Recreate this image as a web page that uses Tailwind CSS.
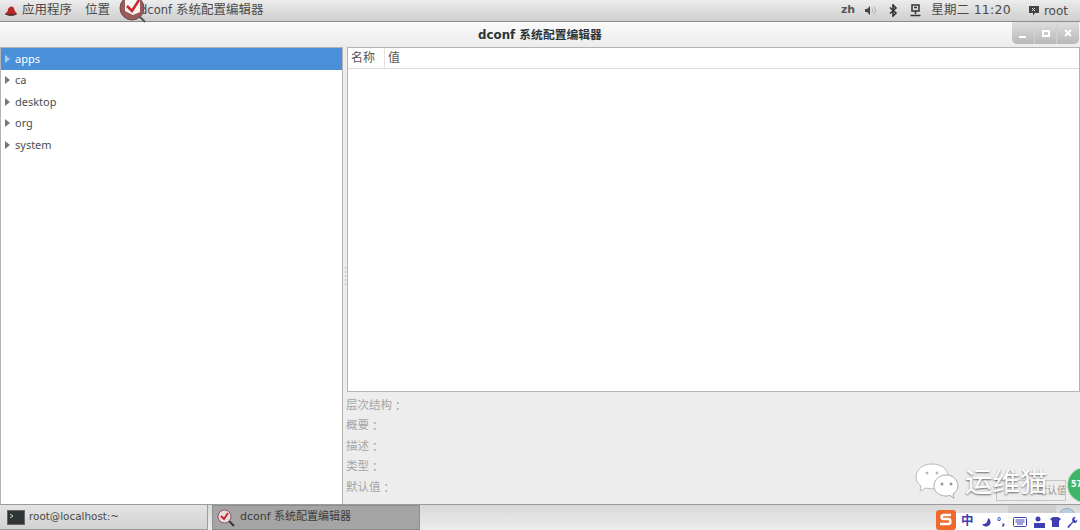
<!DOCTYPE html>
<html lang="zh">
<head>
    <meta charset="UTF-8">
    <title>dconf 系统配置编辑器</title>
    <script src="https://cdn.jsdelivr.net/npm/@tailwindcss/browser@4"></script>
</head>
<body class="relative w-[1080px] h-[530px] overflow-hidden bg-[#ededed] text-[#2e3436] font-['DejaVu_Sans','Noto_Sans_CJK_SC',sans-serif]">

    <!-- Top panel -->
    <header class="h-[22px] flex items-center bg-gradient-to-b from-[#ececec] to-[#cfcfcf] border-b border-[#8c8c8c] text-[12.5px] text-[#4a4a4a]">
        <svg class="ml-[4px] w-[14px] h-[12px]" viewBox="0 0 13 11">
            <path d="M1 8c2 1.500 9 1.500 11 0l-2-2.500C9.500 2 8 1 6 1.500 4 2 3.500 4 3.500 5.500z" fill="#b8242a"/>
            <path d="M0.500 8c3 2.500 9 2.500 12 0-3 1-9 1-12 0z" fill="#222"/>
        </svg>
        <span class="ml-[4px]">应用程序</span>
        <span class="ml-[13px]">位置</span>
        <span class="ml-[30px]"><span class="text-[11.500px]">dconf</span> 系统配置编辑器</span>
        <div class="ml-auto flex items-center">
            <span class="text-[11px] font-bold text-[#555]">zh</span>
            <svg class="ml-[9px] w-[13px] h-[11px]" viewBox="0 0 13 11">
                <path d="M1 4h2l3-3v9L3 7H1z" fill="#444"/>
                <path d="M8 3.500c1 1 1 3 0 4M10 2c2 2 2 5 0 7" fill="none" stroke="#aaa" stroke-width="1"/>
            </svg>
            <svg class="ml-[12px] w-[9px] h-[13px]" viewBox="0 0 9 13">
                <path d="M1 3.500l6 5.500-3 3V1l3 3-6 5.500" fill="none" stroke="#333" stroke-width="1.600"/>
            </svg>
            <svg class="ml-[12px] w-[11px] h-[13px]" viewBox="0 0 11 13">
                <path d="M2 1h7v6H2z" fill="none" stroke="#333" stroke-width="1.500"/>
                <path d="M4 3.500h3M5.500 7v3M0.500 11.500h10" fill="none" stroke="#333" stroke-width="1.500"/>
            </svg>
            <span class="ml-[10px] tracking-[0.25px]">星期二 11:20</span>
            <svg class="ml-[17px] w-[12px] h-[11px]" viewBox="0 0 12 11">
                <path d="M1 1h10v7H7l-2 2.500V8H1z" fill="#444"/>
                <path d="M4 3l3 3M7 3L4 6" stroke="#ddd" stroke-width="1"/>
            </svg>
            <span class="ml-[4px] mr-[12px] text-[12px]">root</span>
        </div>
    </header>

    <!-- Title bar -->
    <div class="relative h-[25px] flex items-center justify-center pt-[2px] bg-gradient-to-b from-[#fafafa] to-[#ececec] text-[11.800px] font-bold text-[#2e3436]">
        dconf 系统配置编辑器
        <div class="absolute top-0 right-[1px] w-[67px] h-[22px] flex rounded-b-[5px] bg-gradient-to-b from-[#dedede] to-[#b8b8b8] text-white">
            <div class="flex-1 flex items-end justify-center pb-[6px] border-r border-[#d0d0d0]"><div class="w-[7px] h-[2px] bg-white"></div></div>
            <div class="flex-1 flex items-center justify-center border-r border-[#d0d0d0]"><div class="w-[8px] h-[7px] border-2 border-white"></div></div>
            <div class="flex-1 flex items-center justify-center">
                <svg class="w-[8px] h-[8px]" viewBox="0 0 8 8"><path d="M1 1l6 6M7 1L1 7" stroke="#fff" stroke-width="2"/></svg>
            </div>
        </div>
    </div>

    <!-- Main window -->
    <main class="h-[457px] flex">
        <!-- Tree -->
        <div class="w-[343px] bg-white border border-[#b4b4b4] border-b-0 text-[11px] text-[#4a4f51] font-['Noto_Sans',sans-serif]">
            <div class="h-[21.500px] flex items-center bg-[#4a90d9] text-white">
                <span class="ml-[4px] w-0 h-0 border-y-[4px] border-y-transparent border-l-[5px] border-l-[#a9cdf0]"></span>
                <span class="ml-[5px]">apps</span>
            </div>
            <div class="h-[21.500px] flex items-center">
                <span class="ml-[4px] w-0 h-0 border-y-[4px] border-y-transparent border-l-[5px] border-l-[#777]"></span>
                <span class="ml-[5px]">ca</span>
            </div>
            <div class="h-[21.500px] flex items-center">
                <span class="ml-[4px] w-0 h-0 border-y-[4px] border-y-transparent border-l-[5px] border-l-[#777]"></span>
                <span class="ml-[5px]">desktop</span>
            </div>
            <div class="h-[21.500px] flex items-center">
                <span class="ml-[4px] w-0 h-0 border-y-[4px] border-y-transparent border-l-[5px] border-l-[#777]"></span>
                <span class="ml-[5px]">org</span>
            </div>
            <div class="h-[21.500px] flex items-center">
                <span class="ml-[4px] w-0 h-0 border-y-[4px] border-y-transparent border-l-[5px] border-l-[#777]"></span>
                <span class="ml-[5px]">system</span>
            </div>
        </div>

        <!-- Pane handle -->
        <div class="w-[4px] flex flex-col items-center justify-center gap-[2px]">
            <div class="w-[1px] h-[2px] bg-[#bbb]"></div>
            <div class="w-[1px] h-[2px] bg-[#bbb]"></div>
            <div class="w-[1px] h-[2px] bg-[#bbb]"></div>
            <div class="w-[1px] h-[2px] bg-[#bbb]"></div>
            <div class="w-[1px] h-[2px] bg-[#bbb]"></div>
        </div>

        <!-- Keys -->
        <div class="flex-1 flex flex-col">
            <div class="h-[345px] bg-white border border-[#b4b4b4]">
                <div class="h-[21px] flex items-center border-b border-[#dcdcdc] text-[12px] text-[#555]">
                    <div class="w-[37px] h-full flex items-center pl-[3px] border-r border-[#e2e2e2]">名称</div>
                    <div class="pl-[3px]">值</div>
                </div>
            </div>
            <div class="mt-[3px] -ml-[1px] flex flex-col text-[11.500px] text-[#a5a5a5]">
                <div class="h-[20.500px] flex items-center">层次结构<span class="font-['Noto_Sans_CJK_TC']">：</span></div>
                <div class="h-[20.500px] flex items-center">概要<span class="font-['Noto_Sans_CJK_TC']">：</span></div>
                <div class="h-[20.500px] flex items-center">描述<span class="font-['Noto_Sans_CJK_TC']">：</span></div>
                <div class="h-[21px] flex items-center">类型<span class="font-['Noto_Sans_CJK_TC']">：</span></div>
                <div class="h-[21px] flex items-center">默认值<span class="font-['Noto_Sans_CJK_TC']">：</span></div>
            </div>
        </div>
    </main>

    <!-- Bottom panel -->
    <footer class="h-[26px] flex items-stretch bg-gradient-to-b from-[#d8d8d8] to-[#ededed] border-t border-[#9a9a9a] text-[11px] text-[#4a4a4a]">
        <div class="w-[208px] flex items-center bg-gradient-to-b from-[#e4e4e4] to-[#d2d2d2] border-r border-b border-[#9e9e9e]">
            <svg class="ml-[7px] w-[18px] h-[15px]" viewBox="0 0 18 15">
                <rect x="0.500" y="0.500" width="17" height="14" fill="#2f3436" stroke="#666"/>
                <path d="M3 4l3 2-3 2" fill="none" stroke="#ccc"/>
            </svg>
            <span class="ml-[4px] text-[10.400px]">root@localhost:~</span>
        </div>
        <div class="ml-[4px] w-[208px] flex items-center bg-[#a4a4a4] border border-[#8e8e8e]">
            <svg class="ml-[4px] w-[18px] h-[18px]" viewBox="0 0 18 18">
                <path d="M11 11l6 6" stroke="#333" stroke-width="2"/>
                <circle cx="7.500" cy="7.500" r="6.500" fill="#e8dede" stroke="#8a5a5a"/>
                <path d="M4 7l3 3 4-6" fill="none" stroke="#c9252b" stroke-width="2"/>
            </svg>
            <span class="ml-[5px] text-[#3c3c3c]">dconf 系统配置编辑器</span>
        </div>
    </footer>

    <!-- App icon overlapping the top panel -->
    <svg class="absolute left-[119px] top-0 w-[30px] h-[23px]" viewBox="0 0 30 23">
        <path d="M19 15l7 7" stroke="#555" stroke-width="2"/>
        <circle cx="13" cy="8" r="12" fill="#9b5a5a" stroke="#6f4a4a"/>
        <path d="M6 0h15v12l-7 3-8-4z" fill="#f4f4f4"/>
        <path d="M8 6l5 5 7-11" fill="none" stroke="#c9252b" stroke-width="2.500"/>
    </svg>

    <!-- Watermark -->
    <div class="absolute left-[996px] top-[480px] w-[70px] h-[21px] border border-[#c6c6c6] text-[10px] text-[#999] pl-[40px] leading-[20px] overflow-hidden whitespace-nowrap">默认值</div>
    <div class="absolute left-[965px] top-[465px] text-[27.500px] leading-[34px] text-white [text-shadow:0_1px_2px_#666]">运维猫</div>
    <svg class="absolute left-[915px] top-[463px] w-[45px] h-[37px]" viewBox="0 0 45 37">
        <path d="M17 1C8 1 1 6.500 1 14c0 4 2 7 5 9l-1 5 6-3c2 .5 4 .8 6 .8C26 26 33 20 33 13 33 6 26 1 17 1z" fill="#fff" stroke="#bbb"/>
        <path d="M31 12c-7 0-12 5-12 11s5 10 12 10c1.500 0 3-.2 4-.6l4 3-1-4.500c3-2 5-4.500 5-8 0-6-5-11-12-11z" fill="#fff" stroke="#aaa"/>
        <circle cx="12" cy="10" r="1.500" fill="#bbb"/><circle cx="22" cy="10" r="1.500" fill="#bbb"/>
        <circle cx="27" cy="21" r="1.500" fill="#999"/><circle cx="36" cy="21" r="1.500" fill="#999"/>
    </svg>
    <div class="absolute left-[1067px] top-[467px] w-[36px] h-[36px] rounded-full bg-[#3fb56a] border border-[#b7e0c4] text-[8px] font-bold text-white pl-[3px] leading-[34px]">57</div>
    <div class="absolute left-[1008px] top-[505px] w-[48px] h-[25px] bg-[#cfcfcf]"></div>
    <div class="absolute left-[1058px] top-[508px] w-[18px] h-[18px] rounded-full bg-[#b9cfe4] border border-[#9ab]"></div>

    <!-- Input method bar -->
    <div class="absolute left-[955px] top-[513px] w-[125px] h-[17px] flex items-center bg-white text-[#3f3fb0]">
        <span class="ml-[6px] text-[12.500px] font-bold">中</span>
        <svg class="ml-[7px] w-[10px] h-[10px]" viewBox="0 0 10 10"><path d="M7 1a4.500 4.500 0 1 1-6 6c3 1 6-2 6-6z" fill="#3f3fb0"/></svg>
        <span class="ml-[6px] text-[10px] font-bold leading-none">°,</span>
        <svg class="ml-[8px] w-[14px] h-[10px]" viewBox="0 0 14 10"><rect x="0.500" y="0.500" width="13" height="9" rx="1" fill="none" stroke="#3f3fb0"/><path d="M2.500 3h9M2.500 5h9M4 7h6" stroke="#3f3fb0"/></svg>
        <svg class="ml-[6px] w-[13px] h-[12px]" viewBox="0 0 13 12"><circle cx="5" cy="3" r="2.500" fill="#3f3fb0"/><path d="M1 7h11v5H1z" fill="#3f3fb0"/></svg>
        <svg class="ml-[4px] w-[11px] h-[10px]" viewBox="0 0 11 10"><path d="M0 2l3-2h5l3 2-2 2v6H2V4z" fill="#3f3fb0"/></svg>
        <svg class="ml-[5px] w-[12px] h-[12px]" viewBox="0 0 11 11"><path d="M1 10l5-5c-1-2 0-4 3-4L7.500 3 9 4.500l1.500-1.500c0 3-2 4-4 3l-4 5z" fill="#3f3fb0"/></svg>
    </div>
    <svg class="absolute left-[935px] top-[510px] w-[22px] h-[20px]" viewBox="0 0 22 20">
        <rect x="1" y="0" width="20" height="20" rx="3" fill="#ee6a2c"/>
        <path d="M16 5H8.500C6 5 6 9 8.500 9h5c2.500 0 2.500 5 0 5H5" fill="none" stroke="#fff" stroke-width="2.600"/>
    </svg>

</body>
</html>
